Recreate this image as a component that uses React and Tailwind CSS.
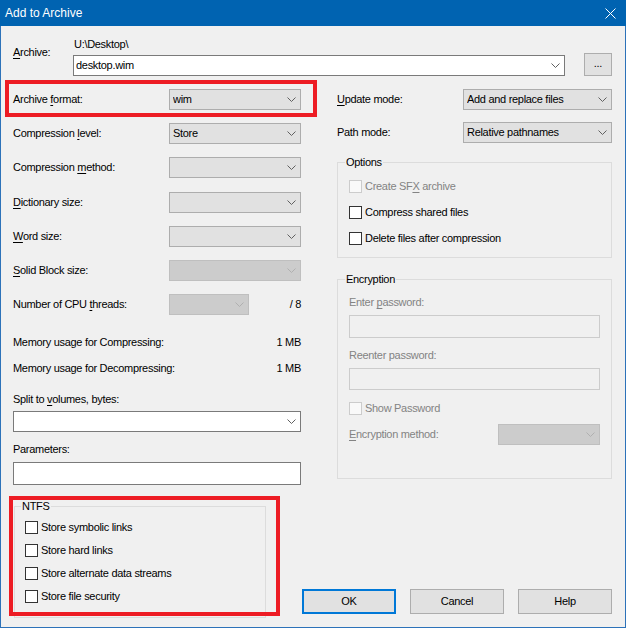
import React from 'react';

function U({ children }) {
  return <span className="underline underline-offset-[2px] decoration-[1px]">{children}</span>;
}

function Chevron({ off }) {
  return (
    <svg width="9" height="5" viewBox="0 0 9 5" className="shrink-0">
      <path d="M0.5 0.5L4.5 4.5L8.5 0.5" fill="none" stroke={off ? '#b0b0b0' : '#606060'} strokeWidth="1" />
    </svg>
  );
}

function Combo({ kind = 'list', text = '', className = '' }) {
  const look = {
    list: 'bg-[#e1e1e1] border-[#adadad]',
    edit: 'bg-white border-[#7a7a7a]',
    off: 'bg-[#cccccc] border-[#bfbfbf]',
  }[kind];
  return (
    <div className={`flex items-center border pr-[4px] ${kind === 'edit' ? 'pl-[2px]' : 'pl-[3px]'} ${look} ${className}`}>
      <span className="flex-1 truncate">{text}</span>
      <Chevron off={kind === 'off'} />
    </div>
  );
}

function Check({ label, off }) {
  return (
    <div className={`flex items-center gap-[3px] h-[15px] ${off ? 'text-[#838383]' : ''}`}>
      <div className={`w-[13px] h-[13px] border ${off ? 'border-[#cccccc] bg-[#f9f9f9]' : 'border-[#333333] bg-white'}`} />
      <span>{label}</span>
    </div>
  );
}

function Row({ label, kind, text, wide = 'w-[132px]' }) {
  return (
    <div className="flex items-center h-[21px]">
      <div className="flex-1">{label}</div>
      <Combo kind={kind} text={text} className={`${wide} h-full`} />
    </div>
  );
}

export default function App() {
  return (
    <div className="relative w-[626px] h-[628px] flex flex-col bg-[#f0f0f0] font-['Liberation_Sans',Arial,sans-serif] text-[11px] tracking-[-0.3px] leading-[15px] text-black overflow-hidden">
      {/* Title bar */}
      <div className="h-[26px] shrink-0 bg-[#0063b1] flex items-center justify-between pl-[5px] pr-[10px] text-white text-[12px] tracking-normal">
        <span>Add to Archive</span>
        <svg width="11" height="11" viewBox="0 0 11 11">
          <path d="M0.5 0.5L10.5 10.5M10.5 0.5L0.5 10.5" stroke="white" strokeWidth="1" />
        </svg>
      </div>

      <div className="flex-1 flex flex-col border-x border-b border-[#2c72b9] pl-[12px] pr-[13px] pt-[11px]">
        {/* Archive path */}
        <div className="flex h-[39px] shrink-0">
          <div className="w-[60px] pt-[8px]"><U>A</U>rchive:</div>
          <div className="flex flex-col w-[492px]">
            <div className="h-[15px] pl-px">{'U:\\Desktop\\'}</div>
            <Combo kind="edit" text="desktop.wim" className="mt-[3px] w-full h-[21px]" />
          </div>
          <button className="ml-auto self-end w-[28px] h-[23px] bg-[#e1e1e1] border border-[#adadad] leading-[12px] pb-[4px]">...</button>
        </div>

        <div className="flex gap-[36px] mt-[13px]">
          {/* Left column */}
          <div className="w-[288px] flex flex-col">
            <div className="flex flex-col gap-[13px]">
              <Row label={<>Archive <U>f</U>ormat:</>} text="wim" />
              <Row label={<>Compression <U>l</U>evel:</>} text="Store" />
              <Row label={<>Compression <U>m</U>ethod:</>} />
              <div className="mt-px">
                <Row label={<><U>D</U>ictionary size:</>} />
              </div>
              <Row label={<><U>W</U>ord size:</>} />
              <Row label={<><U>S</U>olid Block size:</>} kind="off" />
              <div className="flex items-center h-[21px]">
                <div className="w-[156px]">Number of CPU <U>t</U>hreads:</div>
                <Combo kind="off" className="w-[80px] h-full" />
                <span className="ml-auto">/ 8</span>
              </div>
            </div>

            <div className="mt-[20px] flex justify-between h-[15px]">
              <span>Memory usage for Compressing:</span>
              <span>1 MB</span>
            </div>
            <div className="mt-[11px] flex justify-between h-[15px]">
              <span>Memory usage for Decompressing:</span>
              <span>1 MB</span>
            </div>

            <div className="mt-[16px] h-[15px]">Split to <U>v</U>olumes, bytes:</div>
            <Combo kind="edit" className="mt-[4px] w-full h-[21px]" />

            <div className="mt-[10px] h-[15px]">Parameters:</div>
            <div className="mt-[5px] h-[23px] bg-white border border-[#7a7a7a]" />

            <fieldset className="mt-[14px] ml-px w-[252px] border border-[#dcdcdc]">
              <legend className="ml-[6px] px-[1px]">NTFS</legend>
              <div className="flex flex-col gap-[8px] pl-[10px] pt-[6px] pb-[13px]">
                <Check label="Store symbolic links" />
                <Check label="Store hard links" />
                <Check label="Store alternate data streams" />
                <Check label="Store file security" />
              </div>
            </fieldset>
          </div>

          {/* Right column */}
          <div className="w-[275px] flex flex-col">
            <Row label={<><U>U</U>pdate mode:</>} text="Add and replace files" wide="w-[149px]" />
            <div className="mt-[12px]">
              <Row label="Path mode:" text="Relative pathnames" wide="w-[149px]" />
            </div>

            <fieldset className="mt-[12px] w-full border border-[#dcdcdc]">
              <legend className="ml-[7px] px-[1px]">Options</legend>
              <div className="flex flex-col gap-[11px] px-[11px] pt-[9px] pb-[11px]">
                <Check off label={<>Create SF<U>X</U> archive</>} />
                <Check label="Compress shared files" />
                <Check label="Delete files after compression" />
              </div>
            </fieldset>

            <fieldset className="mt-[14px] w-full border border-[#dcdcdc]">
              <legend className="ml-[7px] px-[1px]">Encryption</legend>
              <div className="flex flex-col px-[11px] pt-[8px] pb-[33px] text-[#838383]">
                <div className="h-[15px]">Enter <U>p</U>assword:</div>
                <div className="mt-[5px] h-[23px] bg-[#f0f0f0] border border-[#cccccc]" />
                <div className="mt-[10px] h-[15px]">Reenter password:</div>
                <div className="mt-[5px] h-[22px] bg-[#f0f0f0] border border-[#cccccc]" />
                <div className="mt-[11px]">
                  <Check off label="Show Password" />
                </div>
                <div className="mt-[8px] flex items-center h-[21px]">
                  <div className="flex-1"><U>E</U>ncryption method:</div>
                  <Combo kind="off" className="w-[102px] h-full" />
                </div>
              </div>
            </fieldset>

            <div className="mt-[110px] -ml-[35px] flex gap-[14px]">
              <button className="w-[94px] h-[25px] bg-[#e1e1e1] border-2 border-[#0078d7]">OK</button>
              <button className="w-[94px] h-[25px] bg-[#e1e1e1] border border-[#adadad]">Cancel</button>
              <button className="w-[94px] h-[25px] bg-[#e1e1e1] border border-[#adadad]">Help</button>
            </div>
          </div>
        </div>
      </div>

      {/* Red annotation boxes */}
      <div className="absolute left-[5px] top-[80px] w-[312px] h-[37px] border-4 border-[#ed1c24] pointer-events-none" />
      <div className="absolute left-[9px] top-[496px] w-[271px] h-[120px] border-4 border-[#ed1c24] pointer-events-none" />
    </div>
  );
}
